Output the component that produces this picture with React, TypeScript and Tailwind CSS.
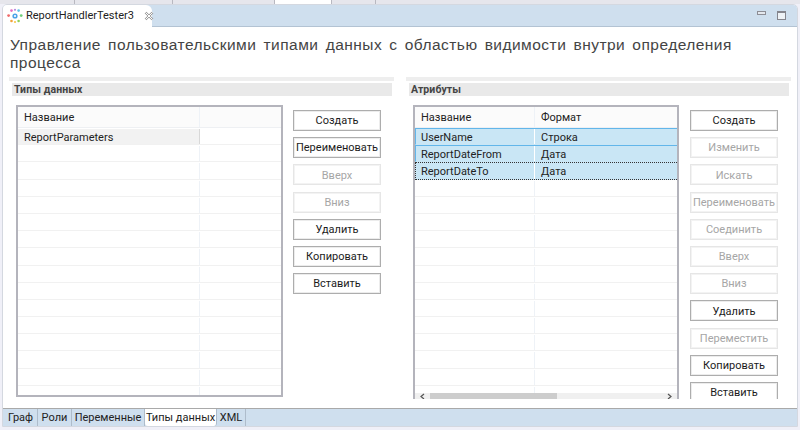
const uiFont = "font-['Roboto','Noto_Sans',sans-serif]"

type Btn = { label: string; off?: boolean }

const leftButtons: Btn[] = [
  { label: "Создать" },
  { label: "Переименовать" },
  { label: "Вверх", off: true },
  { label: "Вниз", off: true },
  { label: "Удалить" },
  { label: "Копировать" },
  { label: "Вставить" },
]

const rightButtons: Btn[] = [
  { label: "Создать" },
  { label: "Изменить", off: true },
  { label: "Искать", off: true },
  { label: "Переименовать", off: true },
  { label: "Соединить", off: true },
  { label: "Вверх", off: true },
  { label: "Вниз", off: true },
  { label: "Удалить" },
  { label: "Переместить", off: true },
  { label: "Копировать" },
  { label: "Вставить" },
]

const Buttons = ({ items }: { items: Btn[] }) => (
  <div className="w-[88px] shrink-0 flex flex-col gap-[6.2px] pt-[5px]">
    {items.map((b) => (
      <div
        key={b.label}
        className={`h-[21px] shrink-0 flex items-center justify-center border pt-[2px] text-[11px] whitespace-nowrap ${
          b.off
            ? "border-[#e6e6e6] shadow-[inset_0_0_0_1px_#f3f3f3] text-[#a6a6a6]"
            : "border-[#adadad] shadow-[inset_0_0_0_1px_#ececec] text-[#1c1c1c]"
        }`}
      >
        {b.label}
      </div>
    ))}
  </div>
)

const SectionHead = ({ title }: { title: string }) => (
  <div>
    <div className="h-[4px] bg-[#eeeeee]" />
    <div className="mt-[2px] ml-[3px] mr-[2px] h-[13px] bg-[#e9e9e9] pl-[2px] text-[10.5px] leading-[14px] font-bold tracking-[0.1px] text-[#444444]">
      {title}
    </div>
  </div>
)

const Logo = () => (
  <svg width="16" height="16" viewBox="0 0 16 16" className="shrink-0">
    <circle cx="8" cy="8" r="2.6" fill="#4aa3e8" />
    <circle cx="8" cy="8" r="1.1" fill="#ffffff" />
    <circle cx="4.5" cy="2.6" r="1.3" fill="#e66bc0" />
    <circle cx="8" cy="1.8" r="1.1" fill="#b58be0" />
    <circle cx="11.6" cy="2.6" r="1.3" fill="#5ec3e8" />
    <circle cx="1.6" cy="7.6" r="1.4" fill="#ef6a6a" />
    <circle cx="14.2" cy="7.6" r="1.4" fill="#6fcf7a" />
    <circle cx="4.5" cy="13" r="1.3" fill="#f2a23c" />
    <circle cx="8" cy="14" r="1.1" fill="#f5c84c" />
    <circle cx="11.6" cy="13" r="1.3" fill="#8fd05a" />
  </svg>
)

type Row = { name?: string; format?: string; sel?: boolean; focus?: boolean; soft?: boolean }

const Table = ({
  col1,
  col2,
  rows,
  splitW,
  scroll,
}: {
  col1: string
  col2?: string
  rows: Row[]
  splitW: string
  scroll?: boolean
}) => (
  <div
    className={`relative flex-1 min-w-0 overflow-hidden border-2 border-[#b4b4bc] ${
      scroll ? "h-[294px] border-b-0" : "h-[292px]"
    }`}
  >
    <div className="flex h-[21px] bg-[#fbfbfb] border-b border-[#eef0f3] text-[11px] text-[#222222]">
      <div className={`${splitW} shrink-0 border-r border-[#eef2f7] pl-[6px] leading-[22px]`}>{col1}</div>
      <div className="flex-1 pl-[6px] leading-[22px]">{col2}</div>
    </div>
    {rows.map((r, i) => (
      <div
        key={i}
        className={`flex h-[17.2px] text-[11px] leading-[17px] text-[#222222] border-t border-b ${
          r.sel
            ? r.focus
              ? "bg-[#c9e6f5] border-b-[#333333] border-dotted border-t-[#333333] border-l border-l-[#333333]"
              : "bg-[#c9e6f5] border-t-[#62b6ea] border-b-transparent border-l border-l-[#62b6ea]"
            : "border-t-transparent border-b-[#f1f1f1]"
        }`}
      >
        <div
          className={`${splitW} shrink-0 border-r ${r.sel ? "-ml-px border-white" : r.soft ? "bg-[#f2f2f2] border-[#d8d8d8]" : "border-[#eef2f7]"} pl-[6px]`}
        >
          {r.name}
        </div>
        <div className="flex-1 pl-[6px]">{r.format}</div>
      </div>
    ))}
    {scroll && (
      <div className="absolute left-0 right-0 bottom-0 h-[6px] bg-[#f0f0f0] flex items-start">
        <svg width="15" height="6" viewBox="0 0 15 6" className="shrink-0">
          <path d="M9 1 L6 3.5 L9 6" stroke="#555555" strokeWidth="1.2" fill="none" />
        </svg>
        <div className="w-[127px] h-full bg-[#cdcdcd]" />
        <svg width="15" height="6" viewBox="0 0 15 6" className="ml-auto shrink-0">
          <path d="M6 1 L9 3.5 L6 6" stroke="#555555" strokeWidth="1.2" fill="none" />
        </svg>
      </div>
    )}
  </div>
)

const emptyRows = (n: number): Row[] => Array.from({ length: n }, () => ({}))

export default function App() {
  const tabs = [
    { label: "Граф", w: "w-[34px]" },
    { label: "Роли", w: "w-[34px]" },
    { label: "Переменные", w: "w-[73px]" },
    { label: "Типы данных", w: "w-[72px]", on: true },
    { label: "XML", w: "w-[29px]" },
  ]

  return (
    <div className={`w-[800px] h-[430px] overflow-hidden bg-[#f0f0f8] flex flex-col ${uiFont}`}>
      {/* обрезанная полоса вкладок сверху */}
      <div className="h-[4px] shrink-0 flex bg-[#e6e6ec]">
        <div className="w-[75px] border-r border-[#b8b8c0]" />
        <div className="w-[98px] border-r border-[#b8b8c0]" />
        <div className="w-[102px] border-r border-[#b8b8c0]" />
        <div className="w-[57px] bg-white border-r border-[#b8b8c0]" />
        <div className="w-[44px] border-r border-[#b8b8c0]" />
      </div>

      <div className="flex-1 mx-[2px] mb-[3px] min-h-0 flex flex-col border border-[#d4d8e0] rounded-t-[5px] overflow-hidden bg-white">
        <div className="h-[22px] shrink-0 flex bg-[#cfdfee] border-b border-[#b3c3d3]">
          <div className="w-[149px] h-[22px] flex items-center gap-[3px] pl-[4px] bg-white rounded-tr-[6px] text-[11px] text-[#222222]">
            <Logo />
            <span className="whitespace-nowrap">ReportHandlerTester3</span>
            <svg width="10" height="10" viewBox="0 0 10 10" className="ml-[7px] shrink-0">
              <path d="M1.5 1.5 L8.5 8.5 M8.5 1.5 L1.5 8.5" stroke="#9a9a9a" strokeWidth="2.4" fill="none" />
              <path d="M1.5 1.5 L8.5 8.5 M8.5 1.5 L1.5 8.5" stroke="#ffffff" strokeWidth="1" fill="none" />
            </svg>
          </div>
          <div className="ml-auto flex items-start gap-[11px] pt-[6px] pr-[11px]">
            <div className="w-[9px] h-[4px] border border-[#8d8d95] bg-[#e4e8ee]" />
            <div className="w-[9px] h-[9px] border border-[#85858d] border-t-2 bg-[#eef2f6]" />
          </div>
        </div>

        <div className="flex-1 min-h-0 overflow-hidden flex flex-col mb-[9px]">
          <h1 className="pt-[9px] pl-[7px] pr-[50px] text-[15.5px] leading-[17.5px] tracking-[0.47px] [word-spacing:2.4px] text-[#444444] font-['Liberation_Sans',sans-serif]">
            Управление пользовательскими типами данных с областью видимости внутри определения процесса
          </h1>

          <div className="mt-[6px] flex-1 min-h-0 overflow-hidden flex gap-[12px] pl-[6px] pr-[6px]">
            <div className="w-[385px] shrink-0">
              <SectionHead title="Типы данных" />
              <div className="mt-[9px] ml-[7px] mr-[13px] flex gap-[10px]">
                <Table
                  col1="Название"
                  splitW="w-[182px]"
                  rows={[{ name: "ReportParameters", soft: true }, ...emptyRows(15)]}
                />
                <Buttons items={leftButtons} />
              </div>
            </div>
            <div className="w-[385px] shrink-0">
              <SectionHead title="Атрибуты" />
              <div className="mt-[9px] ml-[7px] mr-[13px] flex gap-[11px]">
                <Table
                  col1="Название"
                  col2="Формат"
                  splitW="w-[120px]"
                  scroll
                  rows={[
                    { name: "UserName", format: "Строка", sel: true },
                    { name: "ReportDateFrom", format: "Дата", sel: true },
                    { name: "ReportDateTo", format: "Дата", sel: true, focus: true },
                    ...emptyRows(13),
                  ]}
                />
                <Buttons items={rightButtons} />
              </div>
            </div>
          </div>
        </div>

        <div className="h-[18px] shrink-0 flex bg-[#cfdfee] border-t border-[#a9a9a9] pl-[1px] text-[11px] leading-[18px] text-[#222222]">
          {tabs.map((t) => (
            <div
              key={t.label}
              className={`${t.w} text-center whitespace-nowrap border-r border-[#aebccb] ${t.on ? "bg-white rounded-b-[3px]" : ""}`}
            >
              {t.label}
            </div>
          ))}
        </div>
      </div>
    </div>
  )
}
